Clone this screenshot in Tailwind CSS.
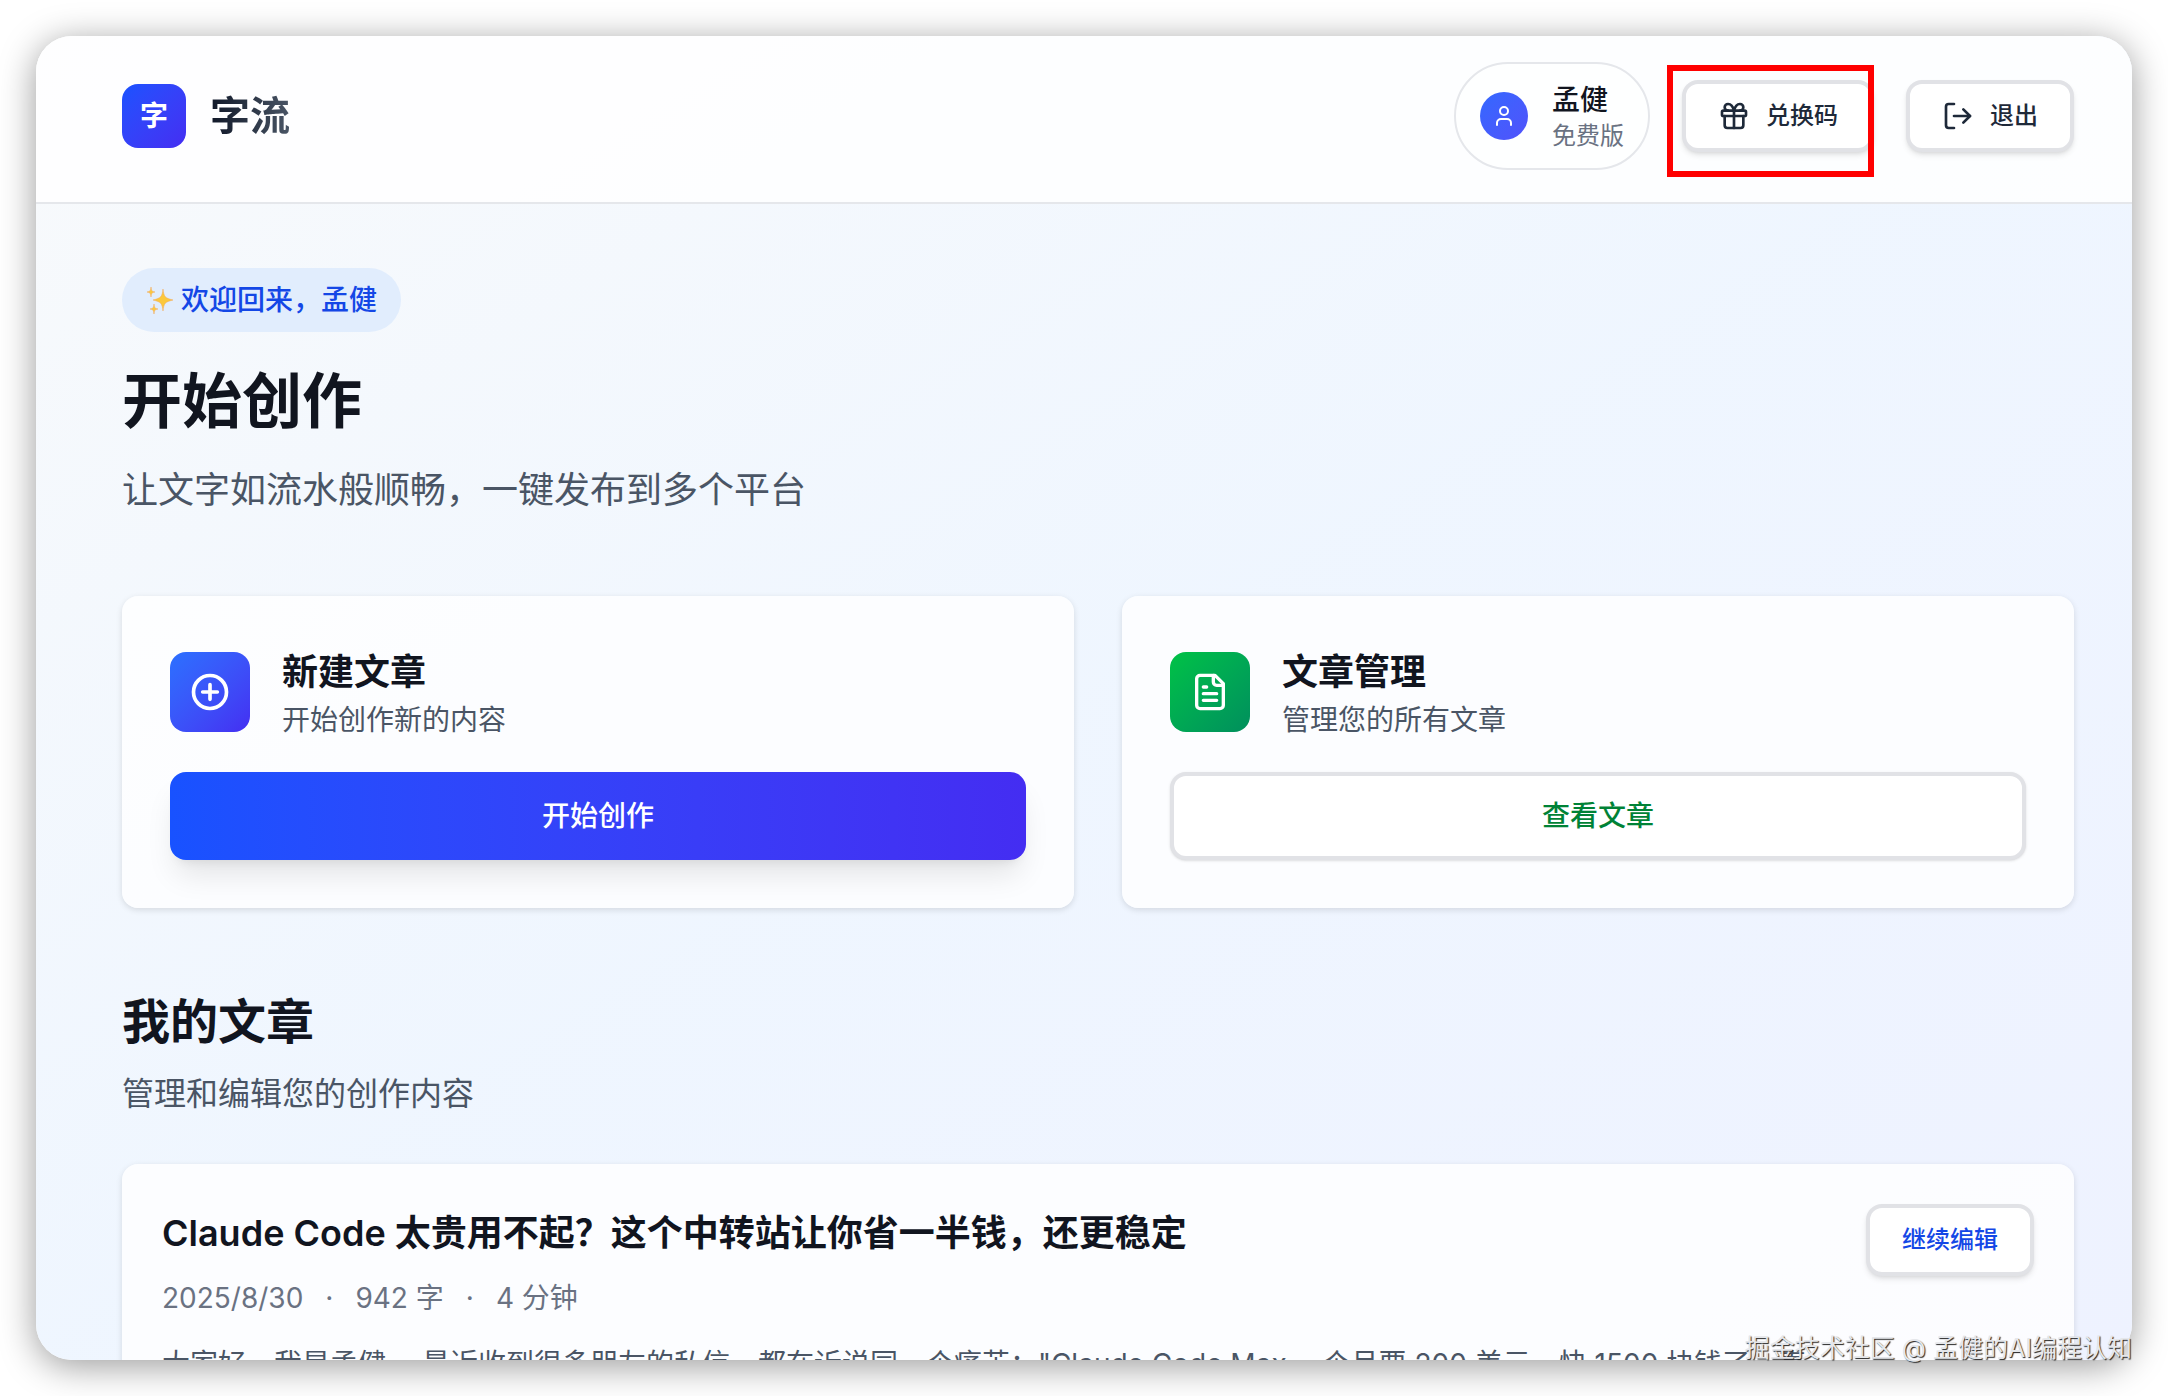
<!DOCTYPE html>
<html lang="zh-CN">
<head>
<meta charset="utf-8">
<meta name="viewport" content="width=device-width, initial-scale=1">
<title>字流</title>
<script src="https://cdn.jsdelivr.net/npm/@tailwindcss/browser@4"></script>
</head>
<body class="h-screen overflow-hidden bg-white p-9 font-['Inter','Noto_Sans_CJK_SC',sans-serif] text-[#11151f]">
<div class="relative h-full">
  <div class="h-full overflow-hidden rounded-[36px] bg-linear-to-br from-slate-50 via-blue-50 to-indigo-50 shadow-[0_6px_36px_rgba(0,0,0,0.4)]">
    <header class="flex items-center justify-between border-b-2 border-gray-200 bg-white/85 pt-[26px] pr-[58px] pb-8 pl-[86px]">
      <a href="#" class="flex items-center gap-6">
        <span class="flex size-16 items-center justify-center rounded-2xl bg-linear-to-br from-[#1852ff] to-[#442df2] text-[28px] font-bold text-white">字</span>
        <span class="bg-linear-to-r from-gray-900 to-gray-600 bg-clip-text text-[40px] leading-[58px] font-bold text-transparent">字流</span>
      </a>
      <div class="flex items-center gap-8">
        <div class="flex items-center gap-6 rounded-full border-2 border-gray-200 bg-white/60 px-6 py-4">
          <span class="flex size-12 items-center justify-center rounded-full bg-linear-to-br from-[#3268ff] to-[#5052fb]">
            <svg class="size-6 text-white" viewBox="0 0 24 24" fill="none" stroke="currentColor" stroke-width="2" stroke-linecap="round" stroke-linejoin="round"><path d="M19 21v-2a4 4 0 0 0-4-4H9a4 4 0 0 0-4 4v2"/><circle cx="12" cy="7" r="4"/></svg>
          </span>
          <div>
            <p class="text-[28px] leading-10 font-medium">孟健</p>
            <p class="text-2xl leading-8 text-gray-500">免费版</p>
          </div>
        </div>
        <div class="relative">
          <button type="button" class="flex h-18 items-center gap-4 rounded-2xl border-4 border-[#e1e2e6] bg-white px-8 text-2xl font-medium text-gray-800 shadow-md">
            <svg class="size-8" viewBox="0 0 24 24" fill="none" stroke="currentColor" stroke-width="2" stroke-linecap="round" stroke-linejoin="round"><rect x="3" y="8" width="18" height="4" rx="1"/><path d="M12 8v13"/><path d="M19 12v7a2 2 0 0 1-2 2H7a2 2 0 0 1-2-2v-7"/><path d="M7.500 8a2.500 2.500 0 0 1 0-5A4.800 8 0 0 1 12 8a4.800 8 0 0 1 4.500-5 2.500 2.500 0 0 1 0 5"/></svg>
            兑换码
          </button>
          <div class="pointer-events-none absolute -top-[15px] right-0 -bottom-[25px] -left-[15px] border-6 border-[#ff0000]"></div>
        </div>
        <button type="button" class="flex h-18 items-center gap-4 rounded-2xl border-4 border-[#e1e2e6] bg-white px-8 text-2xl font-medium text-gray-800 shadow-md">
          <svg class="size-8" viewBox="0 0 24 24" fill="none" stroke="currentColor" stroke-width="2" stroke-linecap="round" stroke-linejoin="round"><path d="M9 21H5a2 2 0 0 1-2-2V5a2 2 0 0 1 2-2h4"/><path d="m16 17 5-5-5-5"/><path d="M21 12H9"/></svg>
          退出
        </button>
      </div>
    </header>

    <main class="pt-16 pr-[58px] pl-[86px]">
      <section>
        <p class="inline-flex h-16 items-center gap-[7px] rounded-full bg-[#e1edfd] px-6 text-[28px] font-medium text-blue-700">
          <svg class="size-7" viewBox="0 0 28 28" fill="#fbc83c" stroke="#f2a65a" stroke-width="0.5"><path d="M17 3c1 8 2 9 10 11-8 2-9 3-10 11-1-8-2-9-10-11 8-2 9-3 10-11Z"/><path d="M5 1c.5 4 1 4.500 4 5-3 .5-3.500 1-4 5-.5-4-1-4.500-4-5 3-.5 3.500-1 4-5ZM8 18c.5 4 1 4.500 4 5-3 .5-3.500 1-4 5-.5-4-1-4.500-4-5 3-.5 3.500-1 4-5Z"/></svg>
          欢迎回来，孟健
        </p>
        <h1 class="mt-8 text-[60px] leading-[74px] font-bold">开始创作</h1>
        <p class="mt-6 text-4xl leading-14 text-gray-600">让文字如流水般顺畅，一键发布到多个平台</p>
      </section>

      <section class="mt-[78px] grid grid-cols-2 gap-12">
        <article class="rounded-2xl bg-white/80 p-12 shadow-[0_2px_6px_rgba(0,0,0,0.12)]">
          <div class="flex items-center gap-8">
            <span class="flex size-20 items-center justify-center rounded-2xl bg-linear-to-br from-[#2b70ff] to-[#442df2]">
              <svg class="size-11 text-white" viewBox="0 0 24 24" fill="none" stroke="currentColor" stroke-width="2" stroke-linecap="round" stroke-linejoin="round"><circle cx="12" cy="12" r="9"/><path d="M8 12h8M12 8v8"/></svg>
            </span>
            <div>
              <h2 class="text-4xl leading-14 font-bold">新建文章</h2>
              <p class="text-[28px] leading-10 text-gray-600">开始创作新的内容</p>
            </div>
          </div>
          <button type="button" class="mt-8 h-22 w-full rounded-2xl bg-linear-to-r from-[#1852ff] to-[#442df2] text-[28px] font-medium text-white shadow-[0_20px_30px_-6px_rgba(0,0,0,0.1),0_8px_12px_-8px_rgba(0,0,0,0.1)]">开始创作</button>
        </article>
        <article class="rounded-2xl bg-white/80 p-12 shadow-[0_2px_6px_rgba(0,0,0,0.12)]">
          <div class="flex items-center gap-8">
            <span class="flex size-20 items-center justify-center rounded-2xl bg-linear-to-br from-[#00c245] to-[#008f5c]">
              <svg class="size-10 text-white" viewBox="0 0 24 24" fill="none" stroke="currentColor" stroke-width="2" stroke-linecap="round" stroke-linejoin="round"><path d="M15 2H6a2 2 0 0 0-2 2v16a2 2 0 0 0 2 2h12a2 2 0 0 0 2-2V7Z"/><path d="M14 2v4a2 2 0 0 0 2 2h4"/><path d="M10 9H8M16 13H8M16 17H8"/></svg>
            </span>
            <div>
              <h2 class="text-4xl leading-14 font-bold">文章管理</h2>
              <p class="text-[28px] leading-10 text-gray-600">管理您的所有文章</p>
            </div>
          </div>
          <button type="button" class="mt-8 h-22 w-full rounded-2xl border-4 border-[#e1e2e6] bg-white text-[28px] font-medium text-green-700 shadow">查看文章</button>
        </article>
      </section>

      <section class="mt-[82px]">
        <h2 class="text-5xl leading-16 font-bold">我的文章</h2>
        <p class="mt-4 text-[32px] leading-12 text-gray-600">管理和编辑您的创作内容</p>
        <article class="mt-[46px] flex items-start justify-between rounded-2xl bg-white/80 p-10 shadow-[0_2px_6px_rgba(0,0,0,0.12)]">
          <div>
            <h3 class="text-4xl leading-[58px] font-semibold">Claude Code 太贵用不起？这个中转站让你省一半钱，还更稳定</h3>
            <p class="mt-4 flex gap-[22px] text-[28px] leading-10 text-gray-500"><span>2025/8/30</span><span>·</span><span>942 字</span><span>·</span><span>4 分钟</span></p>
            <p class="mt-6 text-[28px] leading-11 text-gray-600">大家好，我是孟健。 最近收到很多朋友的私信，都在诉说同一个痛苦："Claude Code Max 一个月要 200 美元，快 1500 块钱了，真</p>
          </div>
          <button type="button" class="h-18 shrink-0 rounded-2xl border-4 border-[#e1e2e6] bg-white px-8 text-2xl font-medium text-blue-700 shadow-md">继续编辑</button>
        </article>
      </section>
    </main>
  </div>
  <p class="absolute right-0 bottom-0 text-[25px] leading-6 text-gray-200 [text-shadow:1px_1px_1px_#222]">掘金技术社区 @ 孟健的AI编程认知</p>
</div>
</body>
</html>
